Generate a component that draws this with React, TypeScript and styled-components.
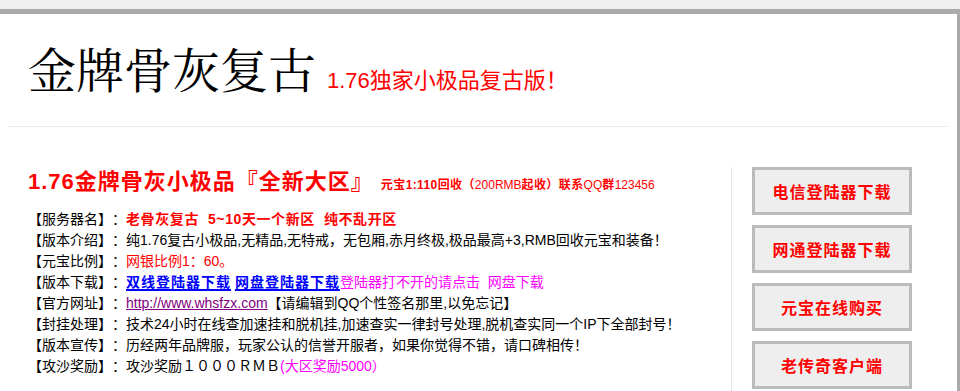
import React from "react";
import styled, { createGlobalStyle, css } from "styled-components";

const Global = createGlobalStyle`
  html, body { margin: 0; padding: 0; }
  body {
    background: #efefef;
    font-family: "Liberation Sans", "Noto Sans CJK SC", sans-serif;
    text-spacing-trim: space-all;
    overflow: hidden;
  }
`;

const Page = styled.div`
  padding-top: 9px;
  width: 960px;
`;

const Panel = styled.div`
  background: #fff;
  border-top: 5px solid #aaa;
  border-right: 3px solid #aaa;
  min-height: 380px;
`;

const Header = styled.div`
  display: flex;
  align-items: baseline;
  padding: 30px 0 34px 28px;
`;

const Title = styled.h1`
  margin: 0;
  font-family: "Noto Serif CJK SC", "AR PL UMing CN", "Noto Sans CJK SC", serif;
  font-weight: 400;
  font-size: 48px;
  line-height: 48px;
  color: #000;
`;

const Sub = styled.span`
  margin-left: 11px;
  font-size: 22px;
  line-height: 22px;
  color: #f00;
`;

const Divider = styled.hr`
  margin: 0 9px 0 8px;
  border: 0;
  border-top: 1px solid #eaeaea;
`;

const Main = styled.div`
  display: flex;
  align-items: flex-start;
`;

const Left = styled.div`
  flex: 1;
  padding: 44px 0 0 28px;
`;

const HeadRow = styled.div`
  display: flex;
  align-items: baseline;
  margin-bottom: 16px;
`;

const Heading = styled.h2`
  margin: 0;
  font-size: 22px;
  line-height: 22px;
  font-weight: 700;
  letter-spacing: 1px;
  color: #f00;
`;

const Note = styled.span`
  margin-left: 7px;
  font-size: 12px;
  line-height: 14px;
  font-weight: 700;
  letter-spacing: 0.4px;
  color: #f00;
`;

const Plain = styled.span`
  font-weight: 400;
  letter-spacing: 0;
`;

const InfoList = styled.div`
  display: flex;
  flex-direction: column;
`;

const Row = styled.div`
  font-size: 14px;
  line-height: 21px;
  color: #000;
  white-space: nowrap;
`;

type Tone = "black" | "red" | "magenta" | "blue";
const toneColor: Record<Tone, string> = {
  black: "#000",
  red: "#f00",
  magenta: "#f0f",
  blue: "#00f",
};

const Text = styled.span<{ $tone?: Tone; $bold?: boolean }>`
  color: ${(p) => toneColor[p.$tone ?? "black"]};
  ${(p) =>
    p.$bold &&
    css`
      font-weight: 700;
      letter-spacing: 0.6px;
    `}
`;

const DownLink = styled.a`
  color: #00f;
  font-weight: 700;
  letter-spacing: 1px;
  text-decoration: underline;
  text-decoration-thickness: 2px;
  text-underline-offset: 2px;
`;

const SiteLink = styled.a`
  color: #800080;
  text-decoration: underline;
`;

const Side = styled.div`
  margin-top: 40px;
  border-left: 1px solid #e6e6e6;
  padding: 0 45px 40px 20px;
  display: flex;
  flex-direction: column;
  gap: 10px;
`;

const DlButton = styled.a`
  box-sizing: border-box;
  width: 160px;
  height: 48px;
  display: flex;
  align-items: center;
  justify-content: center;
  background: #eee;
  border: 3px solid #bbb;
  color: #f00;
  font-size: 16px;
  font-weight: 700;
  letter-spacing: 1px;
  text-decoration: none;
`;

export default function App() {
  return (
    <>
      <Global />
      <Page>
        <Panel>
          <Header>
            <Title>金牌骨灰复古</Title>
            <Sub>1.76独家小极品复古版！</Sub>
          </Header>
          <Divider />
          <Main>
            <Left>
              <HeadRow>
                <Heading>1.76金牌骨灰小极品『全新大区』</Heading>
                <Note>
                  元宝1:110回收（<Plain>200RMB</Plain>起收）联系<Plain>QQ</Plain>群
                  <Plain>123456</Plain>
                </Note>
              </HeadRow>
              <InfoList>
                <Row>
                  【服务器名】：
                  <Text $tone="red" $bold>
                    老骨灰复古&nbsp; 5~10天一个新区&nbsp; 纯不乱开区
                  </Text>
                </Row>
                <Row>
                  【版本介绍】：纯1.76复古小极品,无精品,无特戒，无包厢,赤月终极,极品最高+3,RMB回收元宝和装备！
                </Row>
                <Row>
                  【元宝比例】：<Text $tone="red">网银比例1：60。</Text>
                </Row>
                <Row>
                  【版本下载】：<DownLink href="#">双线登陆器下载</DownLink>{" "}
                  <DownLink href="#">网盘登陆器下载</DownLink>
                  <Text $tone="magenta">登陆器打不开的请点击&nbsp; 网盘下载</Text>
                </Row>
                <Row>
                  【官方网址】：<SiteLink href="#">http://www.whsfzx.com</SiteLink>
                  【请编辑到QQ个性签名那里,以免忘记】
                </Row>
                <Row>
                  【封挂处理】：技术24小时在线查加速挂和脱机挂,加速查实一律封号处理,脱机查实同一个IP下全部封号！
                </Row>
                <Row>
                  【版本宣传】：历经两年品牌服，玩家公认的信誉开服者，如果你觉得不错，请口碑相传！
                </Row>
                <Row>
                  【攻沙奖励】：攻沙奖励１０００ＲＭＢ<Text $tone="magenta">(大区奖励5000）</Text>
                </Row>
              </InfoList>
            </Left>
            <Side>
              <DlButton href="#">电信登陆器下载</DlButton>
              <DlButton href="#">网通登陆器下载</DlButton>
              <DlButton href="#">元宝在线购买</DlButton>
              <DlButton href="#">老传奇客户端</DlButton>
            </Side>
          </Main>
        </Panel>
      </Page>
    </>
  );
}
